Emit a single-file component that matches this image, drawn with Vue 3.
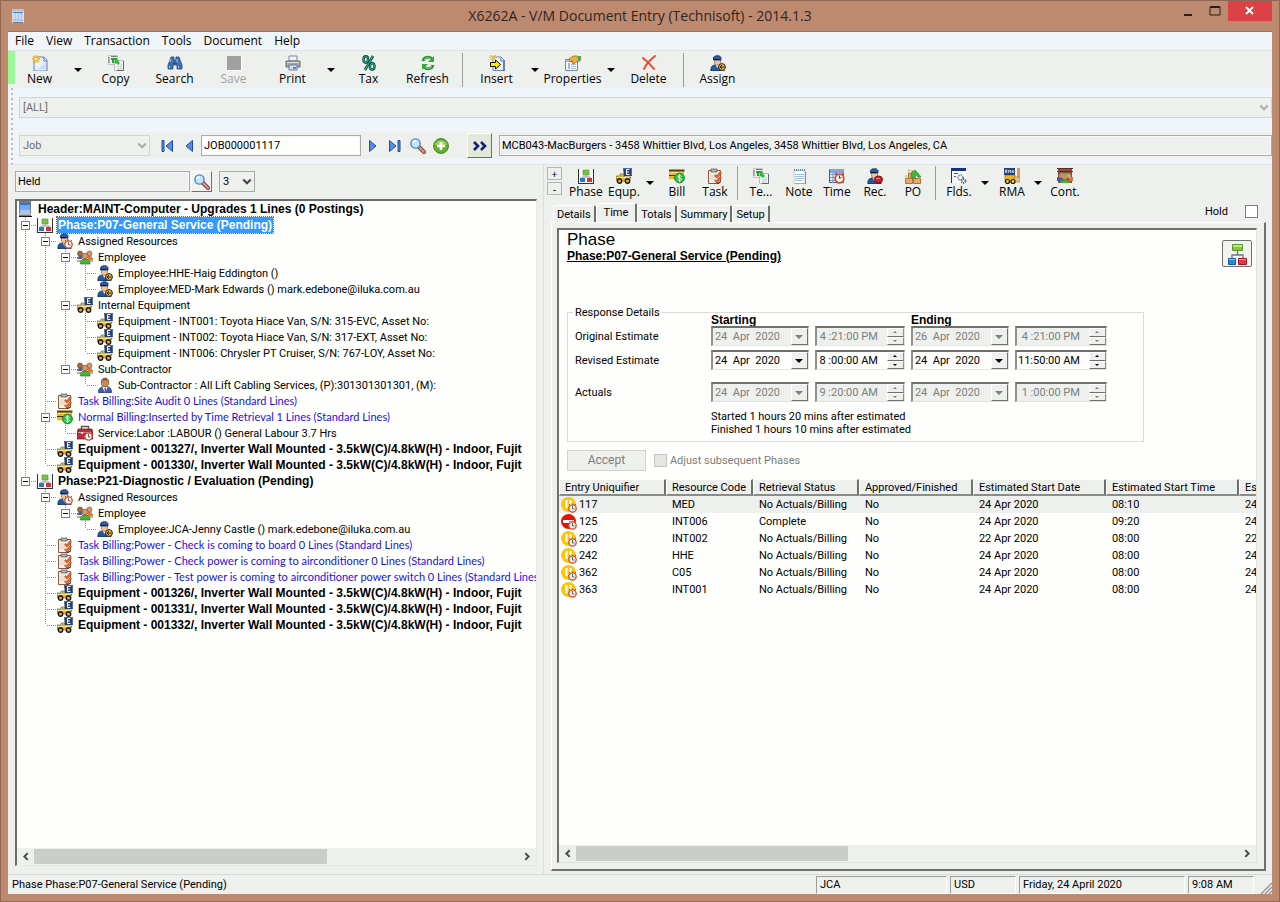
<script setup>
import { ref } from 'vue'

const menus = ['File', 'View', 'Transaction', 'Tools', 'Document', 'Help']

const mainTools = [
  { label: 'New', icon: 'new' }, { arrow: true },
  { label: 'Copy', icon: 'copy' },
  { label: 'Search', icon: 'binoculars' },
  { label: 'Save', icon: 'save', disabled: true },
  { label: 'Print', icon: 'print' }, { arrow: true },
  { label: 'Tax', icon: 'tax' },
  { label: 'Refresh', icon: 'refresh' }, { sep: true },
  { label: 'Insert', icon: 'insert' }, { arrow: true },
  { label: 'Properties', icon: 'props' }, { arrow: true },
  { label: 'Delete', icon: 'delete' }, { sep: true },
  { label: 'Assign', icon: 'worker' }
]

const lineTools = [
  { label: 'Phase', icon: 'phase' },
  { label: 'Equp.', icon: 'truck' }, { arrow: true },
  { label: 'Bill', icon: 'bill' },
  { label: 'Task', icon: 'task' }, { sep: true },
  { label: 'Te...', icon: 'copy' },
  { label: 'Note', icon: 'note' },
  { label: 'Time', icon: 'time' },
  { label: 'Rec.', icon: 'rec' },
  { label: 'PO', icon: 'po' }, { sep: true },
  { label: 'Flds.', icon: 'fields' }, { arrow: true },
  { label: 'RMA', icon: 'rma' }, { arrow: true },
  { label: 'Cont.', icon: 'cont' }
]

/* Guides, one letter per level: v line, t tee, l elbow, T tee + box, L elbow + box, . blank */
const tree = [
  { g: '', icon: 'header', text: 'Header:MAINT-Computer - Upgrades 1 Lines (0 Postings)', kind: 'bold' },
  { g: 'T', icon: 'phase', text: 'Phase:P07-General Service (Pending)', kind: 'bold selected' },
  { g: 'vT', icon: 'workerclock', text: 'Assigned Resources' },
  { g: 'vvT', icon: 'people', text: 'Employee' },
  { g: 'vvvt', icon: 'worker', text: 'Employee:HHE-Haig Eddington ()' },
  { g: 'vvvl', icon: 'worker', text: 'Employee:MED-Mark Edwards () mark.edebone@iluka.com.au' },
  { g: 'vvT', icon: 'truck', text: 'Internal Equipment' },
  { g: 'vvvt', icon: 'truck', text: 'Equipment - INT001: Toyota Hiace Van, S/N: 315-EVC, Asset No:' },
  { g: 'vvvt', icon: 'truck', text: 'Equipment - INT002: Toyota Hiace Van, S/N: 317-EXT, Asset No:' },
  { g: 'vvvl', icon: 'truck', text: 'Equipment - INT006: Chrysler PT Cruiser, S/N: 767-LOY, Asset No:' },
  { g: 'vvL', icon: 'people', text: 'Sub-Contractor' },
  { g: 'vv.l', icon: 'person', text: 'Sub-Contractor : All Lift Cabling Services, (P):301301301301, (M):' },
  { g: 'vt', icon: 'task', text: 'Task Billing:Site Audit 0 Lines (Standard Lines)', kind: 'blue' },
  { g: 'vT', icon: 'bill', text: 'Normal Billing:Inserted by Time Retrieval 1 Lines (Standard Lines)', kind: 'blue' },
  { g: 'vvl', icon: 'toolbox', text: 'Service:Labor :LABOUR () General Labour 3.7 Hrs' },
  { g: 'vt', icon: 'truck', text: 'Equipment - 001327/, Inverter Wall Mounted - 3.5kW(C)/4.8kW(H) - Indoor, Fujit', kind: 'bold' },
  { g: 'vl', icon: 'truck', text: 'Equipment - 001330/, Inverter Wall Mounted - 3.5kW(C)/4.8kW(H) - Indoor, Fujit', kind: 'bold' },
  { g: 'L', icon: 'phase', text: 'Phase:P21-Diagnostic / Evaluation (Pending)', kind: 'bold' },
  { g: '.T', icon: 'workerclock', text: 'Assigned Resources' },
  { g: '.vL', icon: 'people', text: 'Employee' },
  { g: '.v.l', icon: 'worker', text: 'Employee:JCA-Jenny Castle () mark.edebone@iluka.com.au' },
  { g: '.t', icon: 'task', text: 'Task Billing:Power - Check is coming to board 0 Lines (Standard Lines)', kind: 'blue' },
  { g: '.t', icon: 'task', text: 'Task Billing:Power - Check power is coming to airconditioner 0 Lines (Standard Lines)', kind: 'blue' },
  { g: '.t', icon: 'task', text: 'Task Billing:Power - Test power is coming to airconditioner power switch 0 Lines (Standard Lines)', kind: 'blue' },
  { g: '.t', icon: 'truck', text: 'Equipment - 001326/, Inverter Wall Mounted - 3.5kW(C)/4.8kW(H) - Indoor, Fujit', kind: 'bold' },
  { g: '.t', icon: 'truck', text: 'Equipment - 001331/, Inverter Wall Mounted - 3.5kW(C)/4.8kW(H) - Indoor, Fujit', kind: 'bold' },
  { g: '.l', icon: 'truck', text: 'Equipment - 001332/, Inverter Wall Mounted - 3.5kW(C)/4.8kW(H) - Indoor, Fujit', kind: 'bold' }
]

const guideClass = { v: 'v', t: 'v h', l: 'half h', T: 'v h', L: 'half h', '.': '' }

const tabs = ['Details', 'Time', 'Totals', 'Summary', 'Setup']
const activeTab = ref('Time')

const estimates = [
  { name: 'Original Estimate', off: true, v: ['24  Apr  2020', '4 :21:00 PM', '26  Apr  2020', '4 :21:00 PM'] },
  { name: 'Revised Estimate', off: false, v: ['24  Apr  2020', '8 :00:00 AM', '24  Apr  2020', '11:50:00 AM'] },
  { name: 'Actuals', off: true, v: ['24  Apr  2020', '9 :20:00 AM', '24  Apr  2020', '1 :00:00 PM'] }
]
const parts = ['start date', 'start time', 'end date', 'end time']

const columns = ['Entry Uniquifier', 'Resource Code', 'Retrieval Status', 'Approved/Finished', 'Estimated Start Date', 'Estimated Start Time', 'Estimated End Date']
const entries = [
  ['117', 'MED', 'No Actuals/Billing', 'No', '24 Apr 2020', '08:10', '24 Apr 2020'],
  ['125', 'INT006', 'Complete', 'No', '24 Apr 2020', '09:20', '24 Apr 2020'],
  ['220', 'INT002', 'No Actuals/Billing', 'No', '22 Apr 2020', '08:00', '22 Apr 2020'],
  ['242', 'HHE', 'No Actuals/Billing', 'No', '24 Apr 2020', '08:00', '24 Apr 2020'],
  ['362', 'C05', 'No Actuals/Billing', 'No', '24 Apr 2020', '08:00', '24 Apr 2020'],
  ['363', 'INT001', 'No Actuals/Billing', 'No', '24 Apr 2020', '08:00', '24 Apr 2020']
]
const docNumber = ref('JOB000001117')
const filter = ref('Held')
</script>

<template>
  <svg class="sprite" aria-hidden="true">
    <symbol id="i-app" viewBox="0 0 16 16">
      <path d="M2 1h12v14H2z" fill="#d9d6d2" /><path d="M2 1h12v3H2z" fill="#b9c3cc" /><path d="M3 4h10v9H3z" fill="#a9c6f2" />
      <path d="M4 3v8M7 3v8M10 3v8M13 3v8" stroke="#e8effa" /><path d="M3 4.500h10" stroke="#4d7fc9" /><path d="M3 14.500h10" stroke="#777" />
    </symbol>
    <symbol id="i-header" viewBox="0 0 16 16">
      <path d="M2 0h12v15H2z" fill="#6f7b88" /><path d="M3 2h10v11H3z" fill="#78a6f0" /><path d="M3 2h10v2H3z" fill="#2b74e0" /><path d="M3 9h10v3H3z" fill="#a7c4f5" />
      <path d="M2 13h12" stroke="#eee" /><path d="M2 15.500h13" stroke="#111" />
    </symbol>
    <symbol id="i-new" viewBox="0 0 16 16">
      <path d="M4 2h8l3 3v11H2V6z" fill="#e9f0fc" stroke="#5c7fbe" /><path d="M12 2v4h3" fill="#fff" stroke="#4d6fae" /><path d="M5 14h9V8z" fill="#cddcf6" />
      <path d="M4 0v8M0 4h8M1 1l6 6M7 1L1 7" stroke="#f0ac1c" stroke-width="1.300" /><circle cx="4" cy="4" r="1.500" fill="#fff5a0" />
    </symbol>
    <symbol id="i-copy" viewBox="0 0 16 16">
      <path d="M.5.500h9v9h-9z" fill="#eee" stroke="#c2c2c2" /><path d="M1 2v6M3 1.500h6" stroke="#777" /><path d="M6.500 5.500h9v10h-9z" fill="#f5f6f6" stroke="#bbb" />
      <path d="M15.500 6v9.500H9" stroke="#667" fill="none" /><path d="M3 3h6v2H6v3H4V5H3z" fill="#2a9d3b" /><path d="M7 4l4 1-1 1 2 2-2 2-2-2-1 1z" fill="#24c12e" />
      <path d="M12 10h2M9 12h5M9 14h5" stroke="#bcc6cc" />
    </symbol>
    <symbol id="i-binoculars" viewBox="0 0 16 16">
      <path d="M4 2h3v3h2V2h3l1 3 2 5v4h-5v-4H6v4H1v-4l2-5z" fill="#4170ae" stroke="#1d4684" stroke-width=".8" />
      <path d="M3 7l1-3M2.500 11v2M11.500 11v2M10 4v4" stroke="#a4caef" /><path d="M6 8h4" stroke="#123464" />
    </symbol>
    <symbol id="i-save" viewBox="0 0 16 16"><path d="M1 1h14v14H1z" fill="#a0a0a0" /><path d="M1 15.500h14.500V1" stroke="#fff" fill="none" /></symbol>
    <symbol id="i-print" viewBox="0 0 16 16">
      <path d="M4 1h8v5H4z" fill="#eef4fd" stroke="#7c8798" /><path d="M1 6h14v6H1z" fill="#a4a6a8" stroke="#6c6e70" /><path d="M2 7h12v1H2z" fill="#dedede" />
      <path d="M4 10h8v5H4z" fill="#cfe0fb" stroke="#6d7c9c" /><path d="M8 12h3v2H8z" fill="#5d83c4" />
    </symbol>
    <symbol id="i-tax" viewBox="0 0 16 16">
      <path d="M12 1L4 15" stroke="#0b4b3c" stroke-width="2.600" /><path d="M12 1L4 15" stroke="#25b08b" stroke-width="1.200" />
      <ellipse cx="4.800" cy="4.500" rx="2.300" ry="3.200" fill="none" stroke="#0b4b3c" stroke-width="2.400" /><ellipse cx="4.800" cy="4.500" rx="2.300" ry="3.200" fill="none" stroke="#25b08b" />
      <ellipse cx="11.200" cy="11.500" rx="2.300" ry="3.200" fill="none" stroke="#0b4b3c" stroke-width="2.400" /><ellipse cx="11.200" cy="11.500" rx="2.300" ry="3.200" fill="none" stroke="#25b08b" />
    </symbol>
    <symbol id="i-refresh" viewBox="0 0 16 16">
      <path d="M3 6c1-4 6-5 9-2" fill="none" stroke="#2d8f34" stroke-width="3" /><path d="M14 1v6H8z" fill="#3ba43f" />
      <path d="M13 10c-1 4-6 5-9 2" fill="none" stroke="#2d8f34" stroke-width="3" /><path d="M2 15V9h6z" fill="#3ba43f" />
      <path d="M4 5c2-3 5-3 7-1M12 11c-2 3-5 3-7 1" fill="none" stroke="#9fdc94" />
    </symbol>
    <symbol id="i-insert" viewBox="0 0 16 16">
      <path d="M4 2h8l3 3v11H4z" fill="#e9f0fc" stroke="#6585bd" /><path d="M15 5v11H5" fill="none" stroke="#26478c" /><path d="M12 2v4h3" fill="#fff" stroke="#4d6fae" />
      <path d="M4 0v6M0 2h8M1 0l6 5M7 0L1 5" stroke="#f0b52c" /><path d="M1.500 7.500h5V5l5 4.500-5 4.500v-2.500h-5z" fill="#ffee00" stroke="#111" />
    </symbol>
    <symbol id="i-props" viewBox="0 0 16 16">
      <path d="M.5 4.500h12v11H.5z" fill="#f2f6fd" stroke="#6f88b5" /><path d="M1 5h11v2H1z" fill="#a9bfdf" /><path d="M3 9h2M3 11h2M3 13h2" stroke="#4c76c0" /><path d="M6 9.500h5M6 11.500h5M6 13.500h5" stroke="#b4c1d5" />
      <path d="M4 4l4-3h4l3 2v3l-4 1-2 2-2-1 1-2-3 1z" fill="#e7b044" stroke="#8c6217" stroke-width=".7" /><path d="M13 1h3v4l-3 1z" fill="#4caa4c" />
    </symbol>
    <symbol id="i-delete" viewBox="0 0 16 16"><path d="M2 3c4 3 8 7 11 11M14 1C9 5 5 9 3 14" fill="none" stroke="#f4452c" stroke-width="2" stroke-linecap="round" /></symbol>
    <symbol id="i-body" viewBox="0 0 16 16">
      <path d="M1 16c-.5-4 1-5.500 4-6h5c3 .5 4 2 4 6z" fill="#2258a5" stroke="#0c2348" stroke-width=".8" /><path d="M5.500 10l2 3 2-3z" fill="#f2e8db" />
      <path d="M4.500 4.500h6V8c-1 3-5 3-6 0z" fill="#f0c49c" stroke="#8a5a35" stroke-width=".6" /><path d="M3.500 5V2.500C5 0 10 0 11 2.500V5H8z" fill="#2a5ca8" stroke="#102750" stroke-width=".8" /><path d="M4 4.500h5" stroke="#0a1830" />
    </symbol>
    <symbol id="i-clock" viewBox="0 0 16 16">
      <circle cx="11.500" cy="11.500" r="3.700" fill="#f8f2ec" stroke="#d4492d" stroke-width="1.300" /><path d="M11.500 9v3h2" stroke="#444" fill="none" stroke-width=".8" /><path d="M8 8l1-1M15 8l-1-1M11.500 7.500V6.500" stroke="#a5503d" />
    </symbol>
    <symbol id="i-worker" viewBox="0 0 16 16"><use href="#i-body" /><circle cx="12" cy="12" r="3.400" fill="#f3c13a" stroke="#292012" /><path d="M12 10l-2 2 2 2M10.500 12h4" stroke="#241a08" fill="none" /></symbol>
    <symbol id="i-workerclock" viewBox="0 0 16 16"><use href="#i-body" /><use href="#i-clock" /></symbol>
    <symbol id="i-rec" viewBox="0 0 16 16"><use href="#i-body" /><ellipse cx="11.500" cy="11.500" rx="4" ry="3.500" fill="#d5202a" stroke="#6b0c12" /><path d="M9 10.500h4" stroke="#f5858a" /></symbol>
    <symbol id="i-person" viewBox="0 0 16 16">
      <path d="M1.500 15.500c0-4 2-5 4-6h5c3 1 4 3 4 6z" fill="#3464bb" stroke="#173573" stroke-width=".8" /><path d="M5 9.500l3 6 3-6z" fill="#fff" /><path d="M7.500 11h1.500v5H7.500z" fill="#d43535" />
      <ellipse cx="8" cy="5.500" rx="3.800" ry="4.500" fill="#c68a5d" stroke="#754522" stroke-width=".7" /><path d="M4.500 4c1-4 6-4 7 0-2-1-5-1-7 0z" fill="#8e5a32" />
    </symbol>
    <symbol id="i-people" viewBox="0 0 16 16">
      <path d="M0 10c0-3 2-3 5-3v3z" fill="#425f9e" /><path d="M11 7c3 0 5 0 5 4h-5z" fill="#e07a2f" /><path d="M3.500 15c0-3 1-5 4.500-5s5 2 5 5z" fill="#43b53a" stroke="#246f22" stroke-width=".7" />
      <circle cx="3" cy="4.500" r="2.500" fill="#a66a45" stroke="#603419" stroke-width=".6" /><circle cx="12.500" cy="4.500" r="2.500" fill="#d39a6b" stroke="#774626" stroke-width=".6" /><circle cx="8" cy="7" r="3" fill="#cf9a6d" stroke="#77472a" stroke-width=".6" />
      <path d="M0 12h4M12 12h4" stroke="#a55d2f" />
    </symbol>
    <symbol id="i-truck" viewBox="0 0 16 16">
      <path d="M0 8h4V6h4v3h7l-2 4H1z" fill="#f3bd25" stroke="#74520b" stroke-width=".6" /><path d="M5 6.500h2v2H5z" fill="#88b6dc" /><path d="M1 9.500h12" stroke="#fbe07a" />
      <path d="M7 0h9v8H8z" fill="#223f70" /><path d="M7 .5h8.500v7" fill="none" stroke="#4e6fa5" /><path d="M13.500 1.500h-3v5h3M10.500 4h2.500" fill="none" stroke="#fff" />
      <circle cx="3.500" cy="13" r="2.200" fill="#e7b338" stroke="#1c1710" stroke-width="1.400" /><circle cx="11.500" cy="13" r="2.200" fill="#e7b338" stroke="#1c1710" stroke-width="1.400" />
    </symbol>
    <symbol id="i-phase" viewBox="0 0 16 16">
      <path d="M0 1h15v14H0z" fill="#f7f8f7" /><path d="M.5 1v14M0 15.500h16M15.500 1v15" stroke="#30342f" fill="none" /><path d="M5 2h6v5H5z" fill="#7cc043" stroke="#4a912b" stroke-width=".6" />
      <path d="M8 7v2M4 11V9h8v2" stroke="#999" fill="none" /><path d="M2 10h5v4H2z" fill="#2377cf" /><path d="M9 10h5v4H9z" fill="#d3303c" />
    </symbol>
    <symbol id="i-org" viewBox="0 0 20 22">
      <path d="M5.500 1.500h10v6h-10z" fill="#8bc53a" stroke="#5b962c" /><path d="M6 2h9v2H6z" fill="#bee778" /><path d="M10.500 8v4M5 15v-3h11v3" stroke="#777" fill="none" stroke-width="1.400" />
      <path d="M1.500 15.500h7v6h-7z" fill="#2a86d8" stroke="#155ba5" /><path d="M11.500 15.500h8v6h-8z" fill="#dc3a44" stroke="#9e1722" /><path d="M2 16.500h6M12 16.500h7" stroke="#ffffff88" />
    </symbol>
    <symbol id="i-bill" viewBox="0 0 16 16">
      <path d="M0 2h15v9H0z" fill="#f0b429" /><path d="M0 1.500h15.500v2H0z" fill="#5a3f12" /><path d="M1 4.500h12M1 11.500h7" stroke="#fbe48c" /><path d="M0 7h6v1H0z" fill="#47320d" />
      <circle cx="10.500" cy="10" r="4.900" fill="#2fbe3e" stroke="#14892a" /><path d="M12.500 8.500c-1-1.500-4-1-3.500.5s3 .8 3.300 2.300-2.800 1.700-3.800 0M10.500 6v8" fill="none" stroke="#fff" />
    </symbol>
    <symbol id="i-task" viewBox="0 0 16 16">
      <path d="M1.500 2.500h12v12l-3 1h-9z" fill="#f4efe7" stroke="#86583a" /><path d="M4 1h6v3H4z" fill="#aeb6bb" stroke="#5a4b40" stroke-width=".7" /><path d="M3 7h6M3 9h5M3 11h5" stroke="#d6d0ca" />
      <path d="M8 7l2 2 4-5M8 12l2 2 4-5" fill="none" stroke="#a53d14" stroke-width="2.400" /><path d="M8 7l2 2 4-5M8 12l2 2 4-5" fill="none" stroke="#f07a3a" stroke-width="1.200" /><path d="M13 14l-3 2" stroke="#222" />
    </symbol>
    <symbol id="i-note" viewBox="0 0 16 16">
      <path d="M3 2.500h11v13H3z" fill="#fafcff" stroke="#c3cad6" /><path d="M3 2h11" stroke="#5484b8" stroke-width="2" stroke-dasharray="1 1" /><path d="M4 6.500h9M4 8.500h9M4 10.500h9M4 12.500h7" stroke="#a7bddb" /><path d="M14.500 4v12H4" stroke="#889" fill="none" />
    </symbol>
    <symbol id="i-time" viewBox="0 0 16 16">
      <path d="M.5 1.500h14v13H.5z" fill="#e8effa" stroke="#3c5e95" /><path d="M1 1h14v4H1z" fill="#7fa5dc" /><path d="M1 6.500h13M1 9.500h13M1 12.500h13M4 5v10M8 5v10" stroke="#7b96bf" />
      <circle cx="10.500" cy="10.500" r="4.300" fill="#faf3eb" stroke="#d34e28" stroke-width="1.700" /><path d="M10.500 7.500v3l2-1" stroke="#444" fill="none" /><path d="M6 6l2-1M15 6l-2-1" stroke="#cc5531" stroke-width="1.500" />
    </symbol>
    <symbol id="i-po" viewBox="0 0 16 16">
      <path d="M.5 10.500h7v5h-7zM8.500 10.500h7v5h-7zM3.500 5.500h5v5h-5z" fill="#e5ab68" stroke="#b0713a" /><path d="M4 1v5M7 2v4M1 7v4M14 8v3" stroke="#d69145" /><path d="M6 9c0-4 1-6 3-6l1-1 2 2 4 5h-3c-1-2-2-2-3-1l1 3z" fill="#3fb83a" stroke="#1e7c24" stroke-width=".6" />
    </symbol>
    <symbol id="i-fields" viewBox="0 0 16 16">
      <path d="M0 1h15v14H0z" fill="#f8fafb" /><path d="M0 0h15v3H0z" fill="#14337c" /><path d="M.5 1v14" stroke="#333" /><path d="M3 5.500h4M3 8.500h2" stroke="#556" />
      <circle cx="9.500" cy="9.500" r="2.500" fill="none" stroke="#8794a9" stroke-width="2" stroke-dasharray="1.500 .8" /><circle cx="12.500" cy="13" r="2" fill="none" stroke="#56657c" stroke-width="1.800" stroke-dasharray="1.200 .8" />
    </symbol>
    <symbol id="i-rma" viewBox="0 0 16 16">
      <path d="M1 7h10v7H1z" fill="#efb51e" stroke="#8a5d0c" stroke-width=".6" /><path d="M0 0h11v7H0z" fill="#25447b" /><path d="M1.500 5V2H3v1.500H2L3 5M4.500 5V2l1 1.500 1-1.500v3M8 5V3l.8-1 .8 1v2M8 4h1.500" fill="none" stroke="#fff" stroke-width=".6" />
      <path d="M13 0h3v9h-3z" fill="#d99c58" /><path d="M10 9h6v5h-6z" fill="#ecc08a" stroke="#ad713b" stroke-width=".7" /><circle cx="3.500" cy="13.500" r="2" fill="#f2d24b" stroke="#111" stroke-width="1.200" /><circle cx="9" cy="13.500" r="2" fill="#f2d24b" stroke="#111" stroke-width="1.200" />
    </symbol>
    <symbol id="i-cont" viewBox="0 0 16 16">
      <path d="M1 1h14v14H1z" fill="#8b4d42" /><path d="M0 .5h16M0 3.500h16" stroke="#5b2f28" /><path d="M3 5h10v4H3z" fill="#58b948" /><path d="M0 9h4v4H0z" fill="#3c62a5" /><path d="M12 9h4v4h-4z" fill="#d77c37" /><path d="M3 15c1-4 9-4 10 0z" fill="#42b536" />
      <circle cx="4" cy="8" r="2" fill="#c68a62" /><circle cx="12" cy="8" r="2" fill="#d9a477" /><circle cx="8" cy="9" r="2.600" fill="#c98f65" />
    </symbol>
    <symbol id="i-toolbox" viewBox="0 0 16 16">
      <path d="M4.500 4V1.500h7V4" fill="none" stroke="#555" stroke-width="1.400" /><path d="M1 4h14l1 4v6H0V8z" fill="#b92e38" stroke="#6d1219" stroke-width=".7" /><path d="M1 7.500h14" stroke="#ee9198" /><path d="M4 7h2v2H4z" fill="#ddd" /><use href="#i-clock" />
    </symbol>
    <symbol id="i-magnifier" viewBox="0 0 16 16">
      <path d="M9 9l5 5" stroke="#7e3f3c" stroke-width="4" stroke-linecap="round" /><path d="M9 9l5 5" stroke="#d59a92" stroke-width="2" stroke-linecap="round" />
      <circle cx="5.500" cy="5.500" r="4.600" fill="#c3e4fb" stroke="#4a86c4" stroke-width="1.400" /><path d="M3 5c0-2 2-2 3-2" stroke="#fff" stroke-width="1.400" fill="none" />
    </symbol>
    <symbol id="i-plus" viewBox="0 0 16 16"><circle cx="8" cy="8" r="7.400" fill="#64b32d" stroke="#3c8420" /><path d="M2 7c1-6 11-6 12 0z" fill="#9ad35f" /><path d="M8 4v8M4 8h8" stroke="#fff" stroke-width="2.600" /></symbol>
    <symbol id="i-first" viewBox="0 0 16 16"><path d="M3 2.500h2v11H3zM13.500 2.500v11L7 8z" fill="#5b8be0" stroke="#224a9e" /></symbol>
    <symbol id="i-prev" viewBox="0 0 16 16"><path d="M11.500 2.500v11L5 8z" fill="#5b8be0" stroke="#224a9e" /></symbol>
    <symbol id="i-next" viewBox="0 0 16 16"><path d="M4.500 2.500v11L11 8z" fill="#5b8be0" stroke="#224a9e" /></symbol>
    <symbol id="i-last" viewBox="0 0 16 16"><path d="M11 2.500h2v11h-2zM2.500 2.500v11L9 8z" fill="#5b8be0" stroke="#224a9e" /></symbol>
    <symbol id="i-more" viewBox="0 0 16 16"><path d="M2 4l4 4-4 4M9 4l4 4-4 4" fill="none" stroke="#0d1f82" stroke-width="2.600" /></symbol>
    <symbol id="i-pause" viewBox="0 0 16 16"><circle cx="7.500" cy="7.500" r="7.500" fill="#fcc50c" /><path d="M5.500 3v8M9.500 3v6" stroke="#fff" stroke-width="2" /><use href="#i-clock" /></symbol>
    <symbol id="i-stop" viewBox="0 0 16 16"><circle cx="7.500" cy="7.500" r="7.500" fill="#e21508" /><path d="M2 6h11v3H2z" fill="#fff" /><use href="#i-clock" /></symbol>
    <symbol id="i-chev" viewBox="0 0 8 8"><path d="M1 2l3 3 3-3" fill="none" stroke="currentColor" stroke-width="1.600" /></symbol>
    <symbol id="i-left" viewBox="0 0 8 8"><path d="M6 1L3 4l3 3" fill="none" stroke="currentColor" stroke-width="1.800" /></symbol>
    <symbol id="i-right" viewBox="0 0 8 8"><path d="M2 1l3 3-3 3" fill="none" stroke="currentColor" stroke-width="1.800" /></symbol>
  </svg>

  <div class="window">
    <header class="titlebar">
      <svg class="ic app-icon"><use href="#i-app" /></svg>
      <h1>X6262A - V/M Document Entry (Technisoft) - 2014.1.3</h1>
      <div class="winbtns">
        <button aria-label="Minimize"><svg width="10" height="12"><path d="M1 9h8v2H1z" fill="#222" /></svg></button>
        <button aria-label="Maximize"><svg width="12" height="12"><path d="M1 2h10v8H1z" fill="none" stroke="#222" /><path d="M1 2h10" stroke="#222" stroke-width="2" /></svg></button>
        <button class="close" aria-label="Close"><svg width="10" height="10"><path d="M1 1l7 7M8 1L1 8" stroke="#fff" stroke-width="1.800" /></svg></button>
      </div>
    </header>

    <div class="client">
      <nav class="menubar"><button v-for="m in menus" :key="m">{{ m }}</button></nav>

      <div class="toolbar main-tools">
        <span class="green"></span>
        <template v-for="(t, i) in mainTools" :key="i">
          <button v-if="t.label" class="tool" :disabled="t.disabled"><svg class="ic"><use :href="'#i-' + t.icon" /></svg><span>{{ t.label }}</span></button>
          <button v-else-if="t.arrow" class="drop" aria-label="More"></button>
          <i v-else class="sep"></i>
        </template>
      </div>

      <div class="bands">
        <div class="band all-band">
          <div class="select-wrap grow"><select disabled aria-label="Scope"><option>[ALL]</option></select><svg class="chev"><use href="#i-chev" /></svg></div>
        </div>
        <div class="band job-band">
          <div class="select-wrap job"><select disabled aria-label="Document type"><option>Job</option></select><svg class="chev"><use href="#i-chev" /></svg></div>
          <button class="nav" aria-label="First"><svg class="ic"><use href="#i-first" /></svg></button>
          <button class="nav" aria-label="Previous"><svg class="ic"><use href="#i-prev" /></svg></button>
          <input v-model="docNumber" class="field doc" aria-label="Document number">
          <button class="nav" aria-label="Next"><svg class="ic"><use href="#i-next" /></svg></button>
          <button class="nav" aria-label="Last"><svg class="ic"><use href="#i-last" /></svg></button>
          <button class="nav wide" aria-label="Find"><svg class="ic"><use href="#i-magnifier" /></svg></button>
          <button class="nav wide" aria-label="Add"><svg class="ic"><use href="#i-plus" /></svg></button>
          <button class="raised more" aria-label="Customer"><svg class="ic"><use href="#i-more" /></svg></button>
          <input class="field flat grow" readonly aria-label="Customer" value="MCB043-MacBurgers - 3458 Whittier Blvd, Los Angeles, 3458 Whittier Blvd, Los Angeles, CA">
        </div>
      </div>

      <main class="panes">
        <section class="left">
          <div class="filter">
            <input v-model="filter" class="field flat held" aria-label="Status">
            <button class="raised find" aria-label="Find status"><svg class="ic"><use href="#i-magnifier" /></svg></button>
            <div class="select-wrap level"><select aria-label="Level"><option>3</option></select><svg class="chev"><use href="#i-chev" /></svg></div>
          </div>
          <div class="tree">
            <ul>
              <li v-for="(n, i) in tree" :key="i">
                <span v-for="(c, k) in n.g" :key="k" class="guide" :class="guideClass[c]"><b v-if="c === 'T' || c === 'L'"></b></span>
                <span class="node-icon"><svg class="ic"><use :href="'#i-' + n.icon" /></svg></span>
                <span class="node" :class="n.kind">{{ n.text }}</span>
              </li>
            </ul>
            <div class="hscroll">
              <button aria-label="Scroll left"><svg><use href="#i-left" /></svg></button>
              <div class="track"><div class="thumb tree-thumb"></div></div>
              <button aria-label="Scroll right"><svg><use href="#i-right" /></svg></button>
            </div>
          </div>
        </section>

        <section class="right">
          <div class="toolbar line-tools">
            <div class="pm"><button>+</button><button>-</button></div>
            <template v-for="(t, i) in lineTools" :key="i">
              <button v-if="t.label" class="tool"><svg class="ic"><use :href="'#i-' + t.icon" /></svg><span>{{ t.label }}</span></button>
              <button v-else-if="t.arrow" class="drop" aria-label="More"></button>
              <i v-else class="sep"></i>
            </template>
          </div>
          <div class="tabrow">
            <div class="tabs" role="tablist">
              <button v-for="t in tabs" :key="t" role="tab" :aria-selected="t === activeTab" :class="{ active: t === activeTab }" @click="activeTab = t">{{ t }}</button>
            </div>
            <label class="hold"><span>Hold</span><input type="checkbox" class="check"></label>
          </div>
          <div class="frame">
            <div class="sheet">
              <div class="sheet-head">
                <div><h2>Phase</h2><h3>Phase:P07-General Service (Pending)</h3></div>
                <button class="org" aria-label="Phases"><svg><use href="#i-org" /></svg></button>
              </div>
              <fieldset>
                <legend>Response Details</legend>
                <div class="grid">
                  <strong class="starting">Starting</strong><strong class="ending">Ending</strong>
                  <template v-for="(e, r) in estimates" :key="r">
                    <span class="rowname" :class="{ gap: r === 2 }">{{ e.name }}</span>
                    <div v-for="(v, k) in e.v" :key="k" class="combo" :class="{ off: e.off, gap: r === 2, clock: k % 2 }">
                      <input :value="v" :disabled="e.off" :aria-label="e.name + ' ' + parts[k]">
                      <button v-if="k % 2 === 0" class="pick" :disabled="e.off" aria-label="Pick date"></button>
                      <span v-else class="spin"><button class="up" :disabled="e.off" aria-label="Later"></button><button class="down" :disabled="e.off" aria-label="Earlier"></button></span>
                    </div>
                  </template>
                </div>
                <p>Started 1 hours 20 mins after estimated<br>Finished 1 hours 10 mins after estimated</p>
              </fieldset>
              <div class="accept-row">
                <button class="accept" disabled>Accept</button>
                <label><input type="checkbox" class="check" disabled>Adjust subsequent Phases</label>
              </div>
              <div class="table-wrap">
                <table>
                  <colgroup><col class="c1"><col class="c2"><col class="c3"><col class="c4"><col class="c5"><col class="c5"><col class="c5"></colgroup>
                  <thead><tr><th v-for="c in columns" :key="c">{{ c }}</th></tr></thead>
                  <tbody>
                    <tr v-for="(r, i) in entries" :key="i" :class="{ current: i === 0 }">
                      <td v-for="(c, k) in r" :key="k"><svg v-if="k === 0" class="ic"><use :href="i === 1 ? '#i-stop' : '#i-pause'" /></svg>{{ c }}</td>
                    </tr>
                  </tbody>
                </table>
              </div>
              <div class="hscroll">
                <button aria-label="Scroll left"><svg><use href="#i-left" /></svg></button>
                <div class="track"><div class="thumb"></div></div>
                <button aria-label="Scroll right"><svg><use href="#i-right" /></svg></button>
              </div>
            </div>
          </div>
        </section>
      </main>

      <footer>
        <span class="msg">Phase Phase:P07-General Service (Pending)</span>
        <span class="cell user">JCA</span><span class="cell">USD</span><span class="cell date">Friday, 24 April 2020</span><span class="cell">9:08 AM</span>
        <svg class="sizer" width="12" height="12"><path d="M1 12L12 1M5 12l7-7M9 12l3-3" stroke="#999" stroke-width="1.500" /></svg>
      </footer>
    </div>
  </div>
</template>

<style>
body { margin: 0; }
</style>

<style scoped>
* { box-sizing: border-box; }
.sprite { display: none; }
.window { min-height: 100vh; display: flex; flex-direction: column; padding: 0 7px 7px; background: #bd8a70; border: 1px solid #916655; color: #000; font: 11px/13px Roboto, "Liberation Sans", sans-serif; }
button, input, select { font: inherit; color: inherit; margin: 0; padding: 0; border-radius: 0; border: 0; background: none; appearance: none; min-width: 0; }
.ic { width: 16px; height: 16px; display: block; flex: none; }
.grow { flex: 1; }

.titlebar { display: flex; height: 30px; align-items: center; }
.app-icon { margin-left: 2px; }
.titlebar h1 { flex: 1; margin: 0 0 0 80px; text-align: center; font: 14px/20px "Open Sans", sans-serif; color: #2e2622; }
.winbtns { display: flex; align-self: flex-start; }
.winbtns button { width: 27px; height: 20px; display: flex; align-items: center; justify-content: center; }
.winbtns .close { width: 44px; background: #dc4245; }

.client { flex: 1; display: flex; flex-direction: column; background: #f0f5f9; border-top: 1px solid #a0705a; }
.menubar { display: flex; height: 19px; padding-left: 7px; gap: 12px; border-bottom: 1px solid #dfe5e6; font: 12px/18px "Open Sans", sans-serif; }

.toolbar { display: flex; align-items: flex-start; background: #eef0ee; font: 12px/16px "Open Sans", sans-serif; }
.main-tools { height: 37px; }
.green { width: 7px; height: 33px; margin: 0 -5px 0 0; background: #98fb98; }
.tool { width: 59px; padding-top: 4px; display: flex; flex-direction: column; align-items: center; white-space: nowrap; }
.tool:disabled { color: #a2a4a2; }
.drop { width: 17px; height: 38px; display: flex; align-items: center; justify-content: center; }
.drop::after { content: ""; border: 4px solid transparent; border-top-color: #000; border-bottom: 0; }
.sep { width: 10px; height: 34px; margin-top: 2px; display: flex; justify-content: center; }
.sep::after { content: ""; width: 1px; background: #9b9d9b; }

.bands { margin-left: 3px; padding-left: 8px; background: repeating-linear-gradient(#b8bcbe 0 2px, transparent 2px 5px) 0 0 / 2px 100% no-repeat; }
.band { display: flex; align-items: center; }
.all-band { height: 44px; padding-bottom: 5px; }
.job-band { height: 27px; margin-bottom: 5px; background: #eef0ee; }
.select-wrap { position: relative; height: 21px; display: flex; }
.select-wrap select { width: 100%; padding: 0 3px; border: 1px solid #d2d5d2; background: #eef0ee; color: #000; opacity: 1; }
.select-wrap select:disabled { color: #6d6f6d; }
.chev { position: absolute; right: 3px; top: 6px; width: 10px; height: 10px; color: #a9aba9; pointer-events: none; }
.job { width: 131px; margin-right: 6px; }
.nav { width: 22px; height: 20px; display: flex; align-items: center; justify-content: center; }
.wide { width: 23px; }
.field { height: 21px; padding: 0 2px; background: #fefefd; border: 1px solid #a9aba9; box-shadow: inset 0 0 0 1px #f6f7f6; }
.flat { background: #eef0ee; }
.doc { width: 160px; margin: 0 1px; }
.raised { display: flex; align-items: center; justify-content: center; background: #f2f3f0; border: 1px solid #fff; border-right-color: #6e706e; border-bottom-color: #6e706e; }
.more { width: 25px; height: 25px; margin: 0 7px 0 15px; background: #e3e8d8; }

.panes { flex: 1; display: flex; background: #eef0ee; border-top: 1px solid #dfe5e6; min-height: 0; }
.left { flex: 0 0 42.4%; min-width: 0; padding: 6px 6px 8px 7px; display: flex; flex-direction: column; border-right: 1px solid #dcdedc; }
.filter { display: flex; margin-bottom: 7px; }
.held { flex: 0 0 175px; }
.find { width: 21px; height: 21px; margin: 0 7px 0 1px; }
.level { width: 36px; }
.level select { border-color: #a9aba9; }
.level .chev { color: #444; }
.tree { flex: 1; display: flex; flex-direction: column; background: #fefffd; border: 1px solid #e6e8e6; border-top: 2px solid #6b6d6b; border-left: 2px solid #6b6d6b; overflow: hidden; }
.tree ul { flex: 1; margin: 0; padding: 0; list-style: none; }
.tree li { display: flex; height: 16px; white-space: nowrap; }
.guide { position: relative; flex: none; width: 20px; }
.guide.v, .guide.half { background: repeating-linear-gradient(#8a8c8a 0 1px, transparent 1px 2px) 8px 0 / 1px 100% no-repeat; }
.guide.half { background-size: 1px 8px; }
.guide.h::before { content: ""; position: absolute; left: 9px; top: 8px; right: 0; height: 1px; background: repeating-linear-gradient(90deg, transparent 0 1px, #8a8c8a 1px 2px); }
.guide b { position: absolute; left: 4px; top: 4px; width: 9px; height: 9px; border: 1px solid #7d7f7d; background: #fefffd; }
.guide b::after { content: ""; position: absolute; left: 1px; top: 3px; width: 5px; height: 1px; background: #000; }
.node-icon { flex: none; width: 20px; }
.node { padding: 0 1px; line-height: 18px; }
.bold { font: bold 12px/16px "Liberation Sans", sans-serif; }
.blue { font: 11px/16px Lato, "Liberation Sans", sans-serif; color: #1c10e0; }
.selected { background: #3399fe; color: #fff; outline: 1px dotted #b35a14; }

.hscroll { flex: none; display: flex; height: 17px; background: #eef0ee; color: #4a4c4a; }
.hscroll button { width: 17px; display: flex; align-items: center; justify-content: center; }
.hscroll svg { width: 9px; height: 9px; }
.track { flex: 1; padding: 1px 0; display: flex; }
.thumb { width: 41%; background: #cbcdc9; }
.tree-thumb { width: 60.5%; }

.right { flex: 1; min-width: 0; padding: 0 6px 3px 3px; display: flex; flex-direction: column; }
.line-tools { height: 38px; padding-top: 1px; }
.line-tools .tool { width: 38px; padding-top: 2px; }
.line-tools .drop { width: 15px; height: 34px; }
.line-tools .sep { width: 8px; margin-top: 0; }
.pm { width: 20px; padding-top: 1px; display: flex; flex-direction: column; gap: 2px; }
.pm button { width: 15px; height: 13px; border: 1px solid #b4b6b4; font-size: 11px; line-height: 10px; }
.tabrow { display: flex; justify-content: space-between; align-items: flex-end; height: 19px; padding: 0 8px 0 6px; }
.tabs { display: flex; align-items: flex-end; }
.tabs button { height: 17px; padding: 0 3px; border: 1px solid #fff; border-bottom: 0; border-right: 2px solid #6e706e; border-radius: 2px 2px 0 0; }
.tabs .active { height: 19px; padding: 0 7px 2px; }
.hold { display: flex; align-items: center; gap: 17px; padding-bottom: 4px; }
.check { width: 13px; height: 13px; background: #fff; border: 1px solid #7b7d7b; }
.check:disabled { background: #e4e6e4; border-color: #c2c4c2; }
.frame { flex: 1; display: flex; margin-left: 4px; padding: 5px 7px 6px 5px; border: 1px solid #fff; border-right: 2px solid #6e706e; border-bottom: 2px solid #6e706e; }
.sheet { flex: 1; min-width: 0; display: flex; flex-direction: column; background: #fefffd; border: 1px solid #e2e4e2; border-top: 2px solid #6e706e; border-left: 2px solid #6e706e; }
.sheet-head { display: flex; justify-content: space-between; padding: 1px 4px 0 8px; height: 76px; }
.sheet-head h2 { margin: 0; font: 17px/18px "Liberation Sans", sans-serif; }
.sheet-head h3 { margin: 0; font: bold 12px/15px "Liberation Sans", sans-serif; text-decoration: underline; }
.org { width: 30px; height: 27px; margin-top: 9px; display: flex; align-items: center; justify-content: center; border: 1px solid #6e706e; border-radius: 2px; background: #f1f3f1; }
.org svg { width: 20px; height: 22px; }
fieldset { margin: 0 0 0 8px; padding: 0 0 3px 7px; width: 577px; border: 1px solid #d9dbd9; }
legend { padding: 0 2px; margin-left: -2px; line-height: 13px; }
.grid { display: grid; grid-template-columns: 130px 98px 90px 98px 92px; column-gap: 6px; row-gap: 4px; align-items: center; margin-top: -4px; }
.grid strong { font: bold 12px/10px "Liberation Sans", sans-serif; margin-bottom: -3px; }
.starting { grid-column: 2 / 4; }
.ending { grid-column: 4 / 6; }
.gap { margin-top: 8px; }
.combo { display: flex; height: 20px; background: #fefffd; border: 1px solid #e2e4e2; border-top: 2px solid #6e706e; border-left: 2px solid #8e908e; }
.combo input { flex: 1; width: 40px; padding-left: 2px; white-space: pre; }
.clock input { text-align: right; padding: 0 9px 0 0; }
.combo.off { background: #eef0ee; color: #7c7e7c; }
.pick { width: 17px; display: flex; align-items: center; justify-content: center; background: #eef0ee; border: 1px solid #fff; border-right: 1px solid #6e706e; border-bottom: 1px solid #6e706e; }
.pick::after { content: ""; border: 4px solid transparent; border-top-color: currentColor; border-bottom: 0; }
.spin { width: 17px; display: flex; flex-direction: column; background: #eef0ee; }
.spin button { flex: 1; display: flex; align-items: center; justify-content: center; border: 1px solid #fff; border-right-color: #8e908e; border-bottom-color: #6e706e; }
.up::after { content: ""; border: 2px solid transparent; border-bottom-color: currentColor; border-top: 0; }
.down::after { content: ""; border: 2px solid transparent; border-top-color: currentColor; border-bottom: 0; }
fieldset p { margin: 8px 0 2px 136px; }
.accept-row { display: flex; align-items: center; gap: 8px; padding: 8px 0 8px 8px; color: #7c7e7c; }
.accept { width: 79px; height: 21px; background: #eef0ee; border: 1px solid #d0d2d0; color: #7c7e7c; font-size: 12px; }
.accept-row label { display: flex; align-items: center; gap: 3px; }
.table-wrap { flex: 1; overflow: hidden; }
table { table-layout: fixed; width: 813px; border-collapse: separate; border-spacing: 0; }
.c1 { width: 107px; } .c2 { width: 87px; } .c3 { width: 106px; } .c4 { width: 114px; } .c5 { width: 133px; }
th { height: 17px; padding: 0 0 0 5px; text-align: left; font-weight: 400; white-space: nowrap; background: #eef0ee; border: 1px solid #fff; border-right: 2px solid #6e706e; border-bottom: 2px solid #8a8c8a; }
td { height: 17px; padding: 0 0 0 6px; white-space: nowrap; }
td:first-child { display: flex; align-items: center; gap: 2px; padding-left: 2px; }
.current td { background: #eef0ee; }

footer { display: flex; align-items: center; height: 20px; padding-left: 4px; gap: 3px; background: #eef0ee; border-top: 1px solid #d9dbd9; }
.msg { flex: 1; }
.cell { width: 66px; height: 18px; padding-left: 3px; line-height: 16px; border: 1px solid #fff; border-top-color: #9b9d9b; border-left-color: #9b9d9b; }
.user { width: 131px; }
.date { width: 166px; }
.sizer { margin-left: 3px; align-self: flex-end; }
</style>
